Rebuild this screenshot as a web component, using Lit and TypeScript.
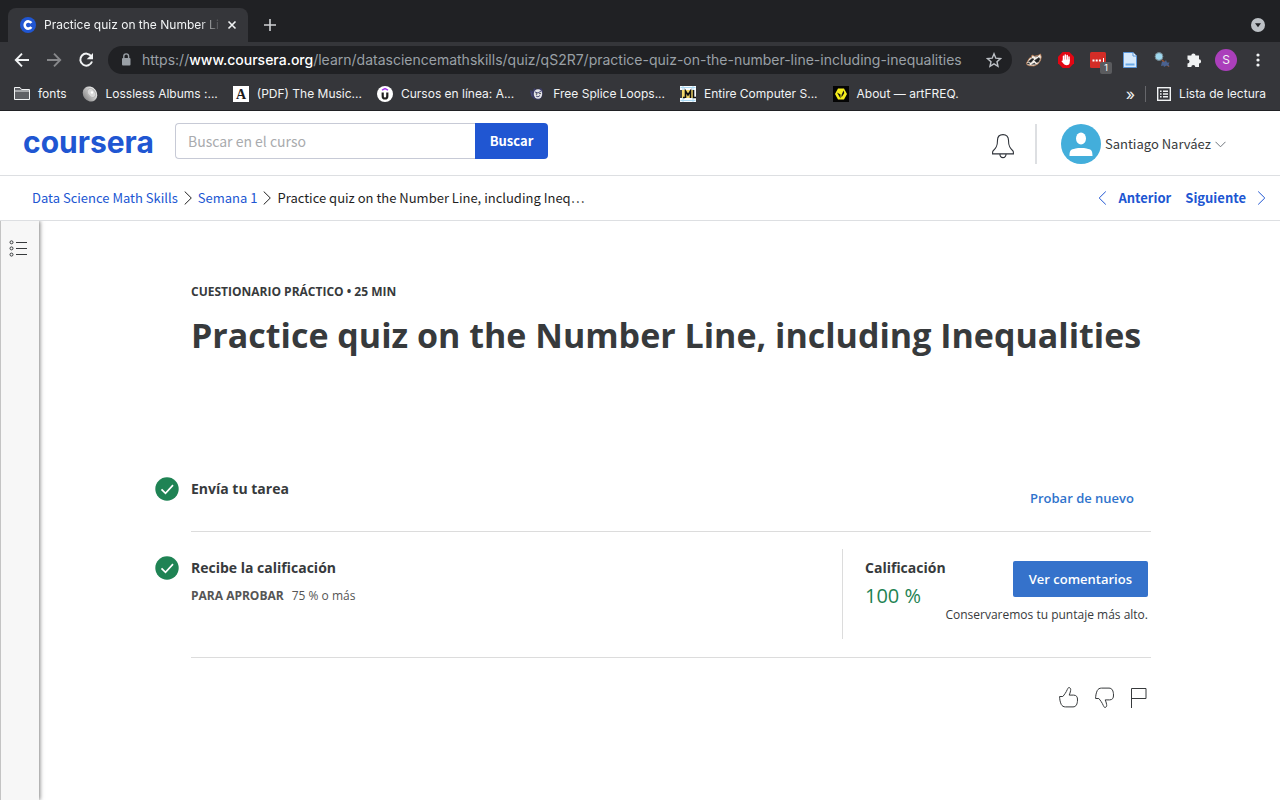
import { LitElement, html, css, svg } from "lit";
import { customElement } from "lit/decorators.js";

const bookmarkIcons = {
  folder: svg`<path d="M.5 13.500v-12H6l1.500 2h8v10z" fill="#5f6165" stroke="#f1f3f4"/><path d="M.5 5h15" stroke="#f1f3f4"/>`,
  disc: svg`<defs><linearGradient id="disc"><stop offset="0" stop-color="#8d8d8d"/><stop offset="1" stop-color="#efefef"/></linearGradient></defs><ellipse cx="8" cy="8" rx="6.800" ry="8" transform="rotate(-38 8 8)" fill="url(#disc)"/><ellipse cx="9.500" cy="7" rx="3.500" ry="5" transform="rotate(-38 9.500 7)" fill="#d8d8d8" stroke="#b4b4b4"/><circle cx="10" cy="6.500" r="1.200" fill="#fff"/>`,
  letter: svg`<path d="M0 0h16v16H0z" fill="#fff"/><text x="8" y="13" text-anchor="middle" font-family="Liberation Serif, serif" font-weight="700" font-size="14" fill="#1a1a1a">A</text>`,
  udemy: svg`<circle cx="8" cy="8" r="8" fill="#fff"/><path d="M5 4.200 8 2.500l3 1.700" fill="none" stroke="#a435f0" stroke-width="1.500"/><path d="M5.700 6.500v3.700q0 2.300 2.300 2.300t2.300-2.300V6.500" fill="none" stroke="#222" stroke-width="2.200"/>`,
  mask: svg`<path d="M1 4l3 1 1-3 3 2 4-2 2 3-1 6-3 3-5-1-3-3z" fill="#3b3b66"/><ellipse cx="9" cy="8" rx="4.200" ry="4.800" fill="#e4e4ea"/><path d="M6 6l3 1 3-2M7 10q2 2 4-.5M2 6l1 4" stroke="#4a4a7a" fill="none"/><circle cx="7.500" cy="8" r=".8" fill="#333"/><circle cx="11" cy="7.500" r=".8" fill="#333"/>`,
  iml: svg`<path d="M0 0h16v16H0z" fill="#f8fcff"/><path d="M.5 1.500h15M.5 14.500h15M3 0v16M13 0v16" stroke="#a9d8f2"/><path d="M2 4h12v8H2z" fill="#f3d76a"/><path d="M1 4v8M3 11.500h2M5.500 12V5l2.500 4 2.500-4v7M13.500 4v7.500H16" fill="none" stroke="#111" stroke-width="1.600"/>`,
  freq: svg`<path d="M0 0h16v16H0z" fill="#050505"/><path d="M5 2.500h6l3 5.500-3 5.500H5L2 8z" fill="#f5ee1c"/><path d="M4 6.500l3.500 2v4zM8.500 9l2-4.500.8 2.500-2.800 4.500z" fill="#111"/>`,
};

const bookmarks = [
  { icon: bookmarkIcons.folder, text: "fonts" },
  { icon: bookmarkIcons.disc, text: "Lossless Albums :..." },
  { icon: bookmarkIcons.letter, text: "(PDF) The Music..." },
  { icon: bookmarkIcons.udemy, text: "Cursos en línea: A..." },
  { icon: bookmarkIcons.mask, text: "Free Splice Loops..." },
  { icon: bookmarkIcons.iml, text: "Entire Computer S..." },
  { icon: bookmarkIcons.freq, text: "About — artFREQ." },
];

@customElement("browser-chrome")
class BrowserChrome extends LitElement {
  static styles = css`
    :host { display: block; background: #35363a; color: #f1f3f4; font-family: Inter, "Liberation Sans", sans-serif; font-size: 12px; border-bottom: 1px solid #202124; }
    * { box-sizing: border-box; }
    svg { display: block; flex: none; }
    button { border: 0; padding: 0; margin: 0; background: none; color: inherit; font: inherit; flex: none; }
    a { color: inherit; text-decoration: none; }
    .strip { display: flex; align-items: flex-end; height: 42px; background: #202124; padding: 0 15px 0 8px; }
    .tab { display: flex; align-items: center; gap: 8px; width: 240px; height: 34px; padding: 0 11px 0 12px; background: #35363a; border-radius: 8px 8px 0 0; }
    .tab-title { flex: 1; white-space: nowrap; -webkit-mask-image: linear-gradient(to right, #000 155px, transparent 178px); mask-image: linear-gradient(to right, #000 155px, transparent 178px); }
    .new-tab { margin: 0 auto 10px 15px; }
    .tab-search { margin-bottom: 10px; }
    .toolbar { display: flex; align-items: center; height: 36px; padding: 0 14px; }
    .history { display: flex; gap: 16px; margin-right: 14px; }
    .address { display: flex; align-items: center; flex: 1; min-width: 0; height: 28px; padding: 0 10px; border-radius: 14px; background: #202124; margin-right: 14px; }
    .url { flex: 1; min-width: 0; height: 28px; display: flex; align-items: center; margin-left: 8px; white-space: nowrap; overflow: hidden; color: #9aa0a6; font-size: 14px; }
    .url b { color: #fff; font-weight: 500; }
    .extensions { display: flex; align-items: center; gap: 16px; }
    .with-badge { position: relative; }
    .badge { position: absolute; left: 10px; top: 10px; width: 12px; height: 12px; border-radius: 2px; background: #5a5b5e; font-size: 9px; line-height: 12px; text-align: center; color: #fff; }
    .account { width: 22px; height: 22px; border-radius: 50%; background: #ab3fbb; font-size: 12px; margin: 0 -3px; }
    .bookmarks { display: flex; align-items: center; gap: 15px; height: 32px; padding: 0 14px; white-space: nowrap; }
    .bookmark { display: flex; align-items: center; gap: 8px; }
    .more { margin-left: auto; font-size: 16px; line-height: 16px; }
    .reading { display: flex; align-items: center; gap: 8px; height: 16px; padding-left: 11px; border-left: 1px solid #66676b; margin-left: -5px; }
  `;

  render() {
    return html`
      <div class="strip">
        <div class="tab">
          <svg width="16" height="16" viewBox="0 0 16 16"><circle cx="8" cy="8" r="8" fill="#2056d2"/><path d="M11.300 6A3.600 3.600 0 1 0 11.300 10" fill="none" stroke="#fff" stroke-width="2.600"/></svg>
          <span class="tab-title">Practice quiz on the Number Li</span>
          <button aria-label="Cerrar"><svg width="10" height="10" viewBox="0 0 10 10"><path d="M1.500 1.500l7 7m0-7l-7 7" stroke="#f1f3f4" stroke-width="1.600"/></svg></button>
        </div>
        <button class="new-tab" aria-label="Nueva pestaña"><svg width="14" height="14" viewBox="0 0 14 14"><path d="M7 1v12M1 7h12" stroke="#cfd1d4" stroke-width="1.600"/></svg></button>
        <button class="tab-search" aria-label="Buscar pestañas"><svg width="14" height="14" viewBox="0 0 14 14"><circle cx="7" cy="7" r="7" fill="#bdc1c6"/><path d="M4 5.300h6L7 9.200z" fill="#202124"/></svg></button>
      </div>
      <div class="toolbar">
        <div class="history">
          <button aria-label="Atrás"><svg width="16" height="16" viewBox="0 0 16 16"><path d="M15 8H2M8 1.700 1.800 8 8 14.300" fill="none" stroke="#f1f3f4" stroke-width="1.900"/></svg></button>
          <button aria-label="Adelante"><svg width="16" height="16" viewBox="0 0 16 16"><path d="M1 8h13M8 1.700 14.200 8 8 14.300" fill="none" stroke="#87888b" stroke-width="1.900"/></svg></button>
          <button aria-label="Recargar"><svg width="16" height="16" viewBox="0 0 16 16"><path d="M13.300 4.300A6 6 0 1 0 14 9.500" fill="none" stroke="#f1f3f4" stroke-width="2"/><path d="M15 1v6.300H8.700z" fill="#f1f3f4"/></svg></button>
        </div>
        <div class="address">
          <svg width="16" height="16" viewBox="0 0 16 16"><rect x="4" y="6" width="8.500" height="7.500" rx="1" fill="#9aa0a6"/><path d="M5.800 6.500V4.300a2.400 2.400 0 0 1 4.800 0v2.200" fill="none" stroke="#9aa0a6" stroke-width="1.400"/></svg>
          <div class="url"><span>https://<b>www.coursera.org</b>/learn/datasciencemathskills/quiz/qS2R7/practice-quiz-on-the-number-line-including-inequalities</span></div>
          <button aria-label="Marcador"><svg width="16" height="16" viewBox="0 0 16 16"><path d="M8 1.800l1.800 4.400 4.700.4L11 9.700l1 4.600-4-2.500-4 2.500 1-4.600L1.500 6.600l4.700-.4z" fill="none" stroke="#bdc1c6" stroke-width="1.400"/></svg></button>
        </div>
        <div class="extensions">
          <svg width="16" height="16" viewBox="0 0 16 16"><path d="M.5 11 3.500 6l2-.5L6 3l2.500 1.200L12 3.500 14.500 2l.8 3-.8 3.500L12 12l-4 2-4.500-.3L1 12.800z" fill="#f4efe9" stroke="#b8794d" stroke-width=".8"/><path d="M2.500 9.500 6 6.500l2 .5-3 3.500zM8.500 8.500 13 5.500l1 1.500-1.500 3-2 .5zM1 11.500l2-.7.5 1.500zM5.500 12.500l3-1.500 1 1.500M9 5l3-.7" fill="#222" stroke="#333" stroke-width=".5"/></svg>
          <svg width="16" height="16" viewBox="0 0 16 16"><path d="M4.700 0h6.600L16 4.700v6.600L11.300 16H4.700L0 11.300V4.700z" fill="#e30613"/><path d="M5.500 8V4.300M7.300 7.500V3M9.200 7.500V3.400M11 8.500V5" stroke="#fff" stroke-width="1.500" stroke-linecap="round"/><path d="M4.800 7.500h7v2.300q0 3.500-3.300 3.500-2 0-3.200-1.800L3.300 9l1.500-.4z" fill="#fff"/></svg>
          <div class="with-badge"><svg width="16" height="16" viewBox="0 0 16 16"><rect width="16" height="16" rx="1.500" fill="#d32d27"/><path d="M2.500 8.500h8.500" stroke="#fff" stroke-width="2" stroke-dasharray="2 1.200"/><path d="M13.500 6v4" stroke="#fff"/></svg><span class="badge">1</span></div>
          <svg width="16" height="16" viewBox="0 0 16 16"><path d="M1.500.5h9.500L14.500 4v11.500h-13z" fill="#d6e9fb" stroke="#5794d8"/><path d="M11 .5V4h3.500" fill="#fff" stroke="#5794d8"/><path d="M3.500 11.500h9v2h-9z" fill="#6aa9e6"/></svg>
          <svg width="16" height="16" viewBox="0 0 16 16"><path d="M8 8l7 6.500" stroke="#a0552f" stroke-width="1.500"/><circle cx="5" cy="4.500" r="3.900" fill="#9fd8ee" stroke="#72858e"/><path d="M7 14 8 9.500 10.500 10l1.500-2 1 2.500 2.500 0-1 2 1 2-3-1-2.500 1.500-.5-1.500z" fill="#4a6290"/></svg>
          <svg width="16" height="16" viewBox="0 0 16 16"><path d="M1.500 3.500h3.800a2.100 2.100 0 1 1 4.200 0h3.500v3.800a2.100 2.100 0 1 1 0 4.200V15H9.300a2 2 0 0 0-4 0H1.500v-3.600a2 2 0 0 0 0-4z" fill="#f1f3f4"/></svg>
          <button class="account">S</button>
          <svg width="16" height="16" viewBox="0 0 16 16"><g fill="#f1f3f4"><circle cx="8" cy="3" r="1.600"/><circle cx="8" cy="8" r="1.600"/><circle cx="8" cy="13" r="1.600"/></g></svg>
        </div>
      </div>
      <nav class="bookmarks">
        ${bookmarks.map((b) => html`<a class="bookmark" href="#"><svg width="16" height="16" viewBox="0 0 16 16">${b.icon}</svg>${b.text}</a>`)}
        <button class="more">»</button>
        <button class="reading"><svg width="14" height="14" viewBox="0 0 14 14"><rect x=".7" y=".7" width="12.600" height="12.600" fill="none" stroke="#f1f3f4" stroke-width="1.400"/><path d="M3 4.200h1.600M6 4.200h5M3 7h1.600M6 7h5M3 9.800h1.600M6 9.800h5" stroke="#f1f3f4" stroke-width="1.500"/></svg>Lista de lectura</button>
      </nav>
    `;
  }
}

@customElement("course-header")
class CourseHeader extends LitElement {
  static styles = css`
    :host { display: block; color: #1f1f1f; font-family: "Noto Sans CJK SC", "Open Sans", sans-serif; font-size: 13px; line-height: 20px; }
    * { box-sizing: border-box; }
    svg { display: block; flex: none; }
    a { color: #2056d2; text-decoration: none; }
    button { border: 0; padding: 0; margin: 0; background: none; color: inherit; font: inherit; }
    .top { display: flex; align-items: center; height: 65px; padding: 0 54px 0 23px; border-bottom: 1px solid #dddfe2; }
    .logo { width: 152px; font: 700 30px/32px Inter, "Open Sans", sans-serif; color: #2056d2; margin-bottom: 2px; }
    .search { display: flex; margin-bottom: 4px; }
    .search input { width: 300px; height: 36px; padding: 0 12px; border: 1px solid #c7cad6; border-right: 0; border-radius: 4px 0 0 4px; font: inherit; font-size: 14px; outline: 0; }
    .search input::placeholder { color: #a9abae; opacity: 1; }
    .search button { width: 73px; height: 36px; border-radius: 0 4px 4px 0; background: #2056d2; color: #fff; font-weight: 700; }
    .user { display: flex; align-items: center; margin-left: auto; padding-top: 2px; }
    .bell { padding-top: 4px; }
    .profile { display: flex; align-items: center; gap: 4px; height: 40px; margin-left: 21px; padding-left: 24px; border-left: 2px solid #dddfe2; color: #373a3c; }
    .trail { display: flex; align-items: center; height: 45px; padding: 0 14px 0 32px; border-bottom: 1px solid #dddfe2; white-space: nowrap; }
    .crumbs { display: flex; align-items: center; gap: 6px; }
    .steps { display: flex; align-items: center; gap: 14px; margin-left: auto; font-weight: 700; }
    .steps a { display: flex; align-items: center; gap: 11px; }
  `;

  render() {
    const arrow = html`<svg width="8" height="14" viewBox="0 0 8 14"><path d="M.7.500 7.300 7 .7 13.500" fill="none" stroke="#1f1f1f"/></svg>`;
    return html`
      <header class="top">
        <div class="logo">coursera</div>
        <form class="search">
          <input type="search" aria-label="Buscar en el curso" placeholder="Buscar en el curso" />
          <button type="button">Buscar</button>
        </form>
        <div class="user">
          <button class="bell" aria-label="Notificaciones"><svg width="22" height="25" viewBox="0 0 22 25"><path d="M11 .6C7.500.6 5.500 3 5.500 6.300c0 5.500-1 7.700-4.500 10.700-.5.500-.4 1-.4 2.900h20.800c0-1.900.1-2.400-.4-2.900-3.500-3-4.500-5.200-4.500-10.700C16.500 3 14.500.6 11 .6zM7.900 20a3.100 3.600 0 0 0 6.200 0" fill="none" stroke="#2d3138" stroke-width="1.100"/></svg></button>
          <button class="profile">
            <svg width="40" height="40" viewBox="0 0 40 40"><circle cx="20" cy="20" r="20" fill="#43aedb"/><ellipse cx="20" cy="14.500" rx="5" ry="6" fill="#fff"/><path d="M8.500 32c0-5.500 1-6.500 6-7.500 3-.6 8-.6 11 0 5 1 6 2 6 7.500z" fill="#fff"/></svg>
            Santiago Narváez
            <svg width="11" height="7" viewBox="0 0 11 7"><path d="M.500.800 5.500 5.800 10.500.800" fill="none" stroke="#6f757c"/></svg>
          </button>
        </div>
      </header>
      <nav class="trail">
        <div class="crumbs">
          <a href="#">Data Science Math Skills</a>${arrow}
          <a href="#">Semana 1</a>${arrow}
          <span>Practice quiz on the Number Line, including Ineq…</span>
        </div>
        <div class="steps">
          <a href="#"><svg width="9" height="14" viewBox="0 0 9 14"><path d="M7.800.500 1.200 7l6.600 6.500" fill="none" stroke="#2056d2"/></svg>Anterior</a>
          <a href="#">Siguiente<svg width="9" height="14" viewBox="0 0 9 14"><path d="M1.200.500 7.800 7 1.200 13.500" fill="none" stroke="#2056d2"/></svg></a>
        </div>
      </nav>
    `;
  }
}

@customElement("app-root")
class AppRoot extends LitElement {
  static styles = css`
    :host { display: flex; flex-direction: column; min-height: 100vh; background: #fff; color: #373a3c; font-family: "Open Sans", "Noto Sans", sans-serif; font-size: 14px; line-height: 20px; }
    * { box-sizing: border-box; }
    svg { display: block; flex: none; }
    button { border: 0; padding: 0; margin: 0; background: none; color: inherit; font: inherit; }
    h1, h2, p { margin: 0; }
    .body { display: flex; flex: 1; }
    .rail { width: 39px; flex: none; padding: 19px 8px; background: #f7f7f7; border-left: 1px solid #c4c4c4; box-shadow: 1px 0 4px rgba(0, 0, 0, 0.5); clip-path: inset(0 -8px 0 0); }
    main { flex: 1; padding: 61px 20px 0 43px; }
    .content { max-width: 960px; margin: 0 auto; }
    .kind { font-size: 12px; font-weight: 700; }
    h1 { font-size: 34px; line-height: 48px; font-weight: 700; margin-top: 9px; }
    .row { display: flex; justify-content: space-between; border-bottom: 1px solid #dcdcdc; }
    .submit { margin-top: 99px; padding: 21px 17px 23px 0; height: 74px; }
    .grade { height: 126px; padding: 17px 3px 18px 0; }
    .step { display: flex; gap: 12px; margin-left: -36px; }
    .step svg { margin-top: -2px; }
    h2 { font-size: 14px; line-height: 20px; font-weight: 700; }
    .grade .step { padding-top: 9px; }
    .pass { margin-top: 8px; font-size: 12px; color: #555; }
    .pass b { margin-right: 8px; }
    .retry { font-size: 13px; font-weight: 600; color: #2f73cc; align-self: flex-end; height: 20px; }
    .result { display: flex; width: 306px; padding: 9px 0 0 22px; border-left: 1px solid #dcdcdc; }
    .score { font-size: 20px; line-height: 28px; margin-top: 4px; color: #1f8354; }
    .feedback { flex: 1; min-width: 0; display: flex; flex-direction: column; align-items: flex-end; padding-top: 3px; white-space: nowrap; font-size: 12px; }
    .feedback button { height: 36px; padding: 0 16px; margin-bottom: 8px; border-radius: 2px; background: #3572cb; color: #fff; font-size: 13px; font-weight: 600; }
    .reactions { display: flex; justify-content: flex-end; align-items: center; gap: 16px; padding: 29px 4px 0 0; }
  `;

  render() {
    const check = html`<svg width="24" height="24" viewBox="0 0 24 24"><circle cx="12" cy="12" r="11.700" fill="#1f8354"/><path d="M6.500 12.300l4 4L18 8.200" fill="none" stroke="#fff" stroke-width="1.700"/></svg>`;
    const thumb = svg`<path d="M.6 9.500h3.200C5.500 7.500 7 5.500 8.300 2.500 8.800 1.300 9.200.6 10 .6c1.300 0 2 1.200 1.600 3-.3 1.900-.8 3.100-1.400 4.500h4.300c2.800 0 4.200 1.700 4 4.900-.1 4-1.300 6.900-4.500 6.900H6.500c-2 0-3.300-.8-4.200-2.400C1.300 15.500.6 12.500.6 9.500z" fill="none" stroke="#373a3c" stroke-width="1"/>`;
    return html`
      <browser-chrome></browser-chrome>
      <course-header></course-header>
      <div class="body">
        <aside class="rail">
          <button aria-label="Contenido"><svg width="18" height="17" viewBox="0 0 18 17"><g fill="none" stroke="#373a3c"><ellipse cx="2.500" cy="2.300" rx="1.500" ry="1.500"/><ellipse cx="2.500" cy="8.400" rx="1.500" ry="1.500"/><ellipse cx="2.500" cy="14.600" rx="1.500" ry="1.500"/><path d="M7 2.500h11M7 8.500h11M7 14.500h11"/></g></svg></button>
        </aside>
        <main>
          <div class="content">
            <p class="kind">CUESTIONARIO PRÁCTICO • 25 MIN</p>
            <h1>Practice quiz on the Number Line, including Inequalities</h1>
            <section class="row submit">
              <div class="step">${check}<h2>Envía tu tarea</h2></div>
              <button class="retry">Probar de nuevo</button>
            </section>
            <section class="row grade">
              <div class="step">${check}
                <div><h2>Recibe la calificación</h2><p class="pass"><b>PARA APROBAR</b>75 % o más</p></div>
              </div>
              <div class="result">
                <div><h2>Calificación</h2><p class="score">100 %</p></div>
                <div class="feedback"><button>Ver comentarios</button><p>Conservaremos tu puntaje más alto.</p></div>
              </div>
            </section>
            <div class="reactions">
              <button aria-label="Me gusta"><svg width="20" height="22" viewBox="0 0 20 22">${thumb}</svg></button>
              <button aria-label="No me gusta"><svg width="20" height="22" viewBox="0 0 20 22"><g transform="translate(0 21) scale(1 -1)">${thumb}</g></svg></button>
              <button aria-label="Reportar"><svg width="16" height="22" viewBox="0 0 16 22"><path d="M.500 21V1.500h14.500v10H.500" fill="none" stroke="#373a3c"/></svg></button>
            </div>
          </div>
        </main>
      </div>
    `;
  }
}
